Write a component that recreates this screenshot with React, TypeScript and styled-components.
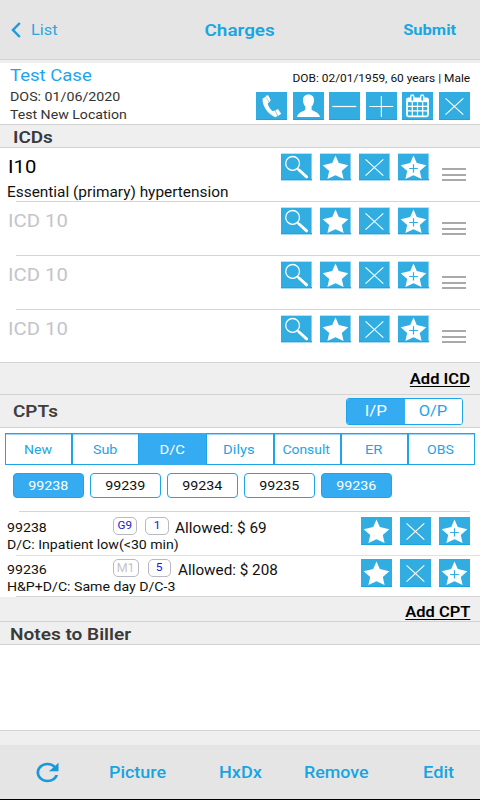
import React from "react";
import styled, { createGlobalStyle, css } from "styled-components";

const BLUE = "#1ea4e9";
const FILL = "#35acf1";
const TILE = "#31ade1";

const GlobalStyle = createGlobalStyle`
  * { box-sizing: border-box; }
  body { margin: 0; background: #fff; font-family: Roboto, sans-serif; color: #111; }
  svg { display: block; }
`;

const Screen = styled.div`
  width: 480px;
  height: 800px;
  display: flex;
  flex-direction: column;
  overflow: hidden;
  background: #fff;
  border-bottom: 1px solid #000;
`;

/* Wide-set label: glyphs are stretched horizontally by $sx */
const Label = styled.span<{
  $size: number;
  $sx?: number;
  $h?: number;
  $weight?: number;
  $color?: string;
  $from?: "left" | "center" | "right";
}>`
  display: block;
  width: max-content;
  white-space: pre;
  font-size: ${(p) => p.$size}px;
  line-height: ${(p) => p.$h ?? 20}px;
  font-weight: ${(p) => p.$weight ?? 400};
  color: ${(p) => p.$color ?? "#111"};
  transform: scaleX(${(p) => p.$sx ?? 1.09});
  transform-origin: ${(p) => p.$from ?? "left"} center;
`;

const Header = styled.header`
  height: 60px;
  flex: none;
  display: grid;
  grid-template-columns: 1fr auto 1fr;
  align-items: center;
  padding: 1px 11px 0 11px;
  background: #e5e5e5;
  border-bottom: 1px solid #d4d4d4;
  & > :last-child { justify-self: end; margin-right: 13px; }
`;

const Back = styled.div`
  display: flex;
  align-items: center;
  gap: 9.5px;
`;

const Strip = styled.div<{ $h: number }>`
  flex: none;
  height: ${(p) => p.$h}px;
  background: #efefef;
`;

const Patient = styled.section`
  flex: none;
  height: 61px;
  display: flex;
  justify-content: space-between;
  padding: 4px 10px 0 10px;
`;

const DosLabel = styled(Label)`
  margin-top: 4px;
`;

const PatientSide = styled.div`
  display: flex;
  flex-direction: column;
  align-items: flex-end;
  padding-top: 4px;
  gap: 6px;
`;

const Bar = styled.div<{ $h: number; $top?: boolean; $left?: number; $right?: number; $pt?: number }>`
  flex: none;
  height: ${(p) => p.$h}px;
  display: flex;
  align-items: center;
  justify-content: space-between;
  padding: ${(p) => p.$pt ?? 0}px ${(p) => p.$right ?? 10}px 0 ${(p) => p.$left ?? 12.5}px;
  background: #efefef;
  border-bottom: 1px solid #d2d2d2;
  ${(p) => p.$top && css`border-top: 1px solid #d2d2d2;`}
`;

const Underlined = styled(Label)`
  text-decoration: underline;
  text-decoration-thickness: 1px;
  text-underline-offset: 2px;
  margin-left: auto;
`;

const Tiles = styled.div<{ $gap: number }>`
  display: flex;
  gap: ${(p) => p.$gap}px;
`;

const Tile = styled.div<{ $w?: number; $edge?: boolean }>`
  width: ${(p) => p.$w ?? 31}px;
  height: 28px;
  background: ${TILE};
  box-shadow: inset 0 -1px #18a5e3;
  ${(p) => p.$edge && css`box-shadow: inset 0 1px #b9e0f4, inset 0 -1px #a9dbf3, inset 0 -2px #1ca6e2, inset -1px 0 #8acdec;`}
`;

const IcdRow = styled.div<{ $h: number }>`
  flex: none;
  height: ${(p) => p.$h}px;
  display: flex;
  justify-content: space-between;
  padding: 5px 14px 0 7px;
`;

const IcdText = styled.div`
  display: flex;
  flex-direction: column;
  gap: 6px;
  padding-top: 4px;
`;

const IcdCode = styled(Label)`
  margin-left: 1px;
`;

const IcdTools = styled.div`
  display: flex;
  gap: 13px;
`;

const Grip = styled.div`
  width: 24px;
  height: 13px;
  margin-top: 15px;
  display: flex;
  flex-direction: column;
  justify-content: space-between;
`;

const GripLine = styled.div`
  height: 2px;
  background: #a9a9a9;
`;

const Divider = styled.div<{ $left: number; $right?: number; $color?: string }>`
  flex: none;
  height: 1px;
  margin: 0 ${(p) => p.$right ?? 0}px 0 ${(p) => p.$left}px;
  background: ${(p) => p.$color ?? "#d4d4d4"};
`;

const Segmented = styled.div`
  width: 117px;
  height: 27px;
  display: flex;
  border: 1px solid ${BLUE};
  border-radius: 3px;
  overflow: hidden;
  background: #fff;
`;

const Segment = styled.div<{ $active?: boolean }>`
  flex: 1;
  display: flex;
  align-items: center;
  justify-content: center;
  background: ${(p) => (p.$active ? FILL : "#fff")};
`;

const Tabs = styled.div`
  flex: none;
  display: grid;
  grid-template-columns: repeat(7, 1fr);
  height: 32px;
  margin: 5px 5px 0;
`;

const Tab = styled.div<{ $active?: boolean }>`
  display: flex;
  align-items: center;
  justify-content: center;
  padding: 2px 2px 0 0;
  border: 1px solid ${(p) => (p.$active ? FILL : BLUE)};
  background: ${(p) => (p.$active ? FILL : "#fff")};
  box-shadow: inset 0 1px ${(p) => (p.$active ? FILL : "#a5d8f8")};
`;

const Chips = styled.div`
  flex: none;
  display: flex;
  gap: 6px;
  padding: 8px 13px 13px;
`;

const Chip = styled.div<{ $active?: boolean }>`
  width: 71px;
  height: 25px;
  display: flex;
  align-items: center;
  justify-content: center;
  border: 1px solid ${BLUE};
  border-radius: 4px;
  background: ${(p) => (p.$active ? FILL : "#fff")};
`;

const CptRow = styled.div<{ $h: number; $pt: number }>`
  flex: none;
  height: ${(p) => p.$h}px;
  display: flex;
  justify-content: space-between;
  padding: ${(p) => p.$pt}px 10px 0 7px;
`;

const CptText = styled.div`
  display: flex;
  flex-direction: column;
`;

const CptLine = styled.div`
  display: grid;
  grid-template-columns: 106px auto auto auto;
  align-items: start;
  height: 20px;
`;

const CptLabel = styled(Label)`
  margin-top: 1px;
`;

const Badge = styled.div<{ $w: number; $mr: number }>`
  width: ${(p) => p.$w}px;
  height: 18px;
  margin-right: ${(p) => p.$mr}px;
  display: flex;
  align-items: center;
  justify-content: center;
  border: 1px solid #b9b9c2;
  border-radius: 5px;
`;

const Notes = styled.div`
  flex: none;
  height: 86px;
  border-bottom: 1px solid #d4d4d4;
`;

const Footer = styled.footer`
  flex: 1;
  display: grid;
  grid-template-columns: 78px 110px 85px 119px auto;
  align-items: center;
  padding: 2px 0 0 31px;
  background: #e5e5e5;
  & > svg { margin-top: -2px; }
`;

const STAR = "M15.5 2.5 18.8 10 28.3 12.2 21.8 18 23.6 26 15.5 22.3 7.4 26 9.2 18 2.7 12.2 12.2 10Z";

type Glyph = "phone" | "person" | "minus" | "plus" | "calendar" | "close" | "search" | "star" | "starPlus";

const glyphs: Record<Glyph, React.ReactNode> = {
  phone: (
    <g fill="#fff">
      <path d="M6.6 6.6C5.8 14 12.5 23 19.5 25.2L21.5 24 18.6 18.6 16.9 19.3C14.2 17.4 12.4 14.8 11.7 11.6L13 10.4 9.6 4.8Z" />
      <path d="M9.8 3.7 12.2 3.2 14.7 8.2 13.4 10.2 9.6 4.4ZM19.2 18.4 22 17 25.2 21.8 22 24Z" />
    </g>
  ),
  person: (
    <path
      d="M15.5 2.5C11.7 2.5 9.8 5 10 8.4 10.1 11 11 13.2 12.4 14.5V17.4C11.8 19.2 4.8 19.6 4 25H27C26.2 19.6 19.2 19.2 18.6 17.4V14.5C20 13.2 20.9 11 21 8.4 21.2 5 19.3 2.5 15.5 2.5Z"
      fill="#fff"
    />
  ),
  minus: <path d="M3.3 14.5H27.3" stroke="#fff" strokeWidth="1.2" />,
  plus: <path d="M3.3 14.5H27.3M15.4 4V25" stroke="#fff" strokeWidth="1.2" />,
  calendar: (
    <g fill="none" stroke="#fff">
      <rect x="5" y="6.4" width="21" height="17.9" rx="1.5" strokeWidth="1.8" />
      <path d="M4.6 8.3H26.4" strokeWidth="3.6" />
      <path d="M6 14.4H25M6 18.9H25M10.3 10V24M15.5 10V24M20.7 10V24" strokeWidth="1.2" />
      <path d="M10.3 4.4V8M20.2 4.4V8" strokeWidth="4.4" strokeLinecap="round" />
      <path d="M10.3 4.6V8M20.2 4.6V8" stroke={TILE} strokeWidth="1.6" strokeLinecap="round" />
    </g>
  ),
  close: <path d="M6.5 6.3 24.3 22.7M24.3 6.3 6.5 22.7" stroke="#fff" strokeWidth="1.1" />,
  search: (
    <g fill="none" stroke="#fff">
      <circle cx="11.6" cy="10.4" r="6.9" strokeWidth="1.3" />
      <path d="M16.3 15.3 18.5 17.4" strokeWidth="1.6" />
      <path d="M18 17 25.6 23.8" strokeWidth="3" strokeLinecap="round" />
    </g>
  ),
  star: <path d={STAR} fill="#fff" />,
  starPlus: (
    <>
      <path d={STAR} fill="#fff" />
      <path d="M11.2 15.5H19.8M15.5 11.2V19.6" stroke={TILE} strokeWidth="1.2" />
    </>
  ),
};

const IconTile = ({ name, w = 31, edge }: { name: Glyph; w?: number; edge?: boolean }) => (
  <Tile $w={w} $edge={edge}>
    <svg width={w} height="28" viewBox="0 0 31 28" preserveAspectRatio="none">
      {glyphs[name]}
    </svg>
  </Tile>
);

const patientIcons: Glyph[] = ["phone", "person", "minus", "plus", "calendar", "close"];
const icdIcons: Glyph[] = ["search", "star", "close", "starPlus"];
const cptIcons: Glyph[] = ["star", "close", "starPlus"];

const icds = [{ code: "I10", text: "Essential (primary) hypertension" }, null, null, null];

const tabs: { name: string; sx: number }[] = [
  { name: "New", sx: 1.08 },
  { name: "Sub", sx: 1.1 },
  { name: "D/C", sx: 1.14 },
  { name: "Dilys", sx: 1.14 },
  { name: "Consult", sx: 1.07 },
  { name: "ER", sx: 1.13 },
  { name: "OBS", sx: 1.08 },
];

const chips = ["99238", "99239", "99234", "99235", "99236"];

export default function App() {
  return (
    <Screen>
      <GlobalStyle />
      <Header>
        <Back>
          <svg width="10" height="16" viewBox="0 0 10 16">
            <path d="M8.8 1 2 8 8.8 15" fill="none" stroke="#1b9be0" strokeWidth="2.5" />
          </svg>
          <Label $size={15} $color="#2ba6e0">List</Label>
        </Back>
        <Label $size={17} $sx={1.11} $weight={600} $color="#17a7e2" $from="center">Charges</Label>
        <Label $size={15} $sx={1.1} $weight={700} $color="#17a7e2" $from="right">Submit</Label>
      </Header>
      <Strip $h={3} />

      <Patient>
        <div>
          <Label $size={17} $h={17} $sx={1.09} $color="#1ca5ef">Test Case</Label>
          <DosLabel $size={13} $h={18} $sx={1.095} $color="#333">DOS: 01/06/2020</DosLabel>
          <Label $size={13} $h={17} $sx={1.085} $color="#333">Test New Location</Label>
        </div>
        <PatientSide>
          <Label $size={11} $h={15} $sx={1.082} $from="right">DOB: 02/01/1959, 60 years | Male</Label>
          <Tiles $gap={5.6}>
            {patientIcons.map((n) => <IconTile key={n} name={n} w={31} />)}
          </Tiles>
        </PatientSide>
      </Patient>

      <Bar $h={24} $top $pt={2}>
        <Label $size={17} $sx={1.11} $weight={600} $color="#3a3a3a">ICDs</Label>
      </Bar>

      {icds.map((icd, i) => (
        <React.Fragment key={i}>
          <IcdRow $h={i < 3 ? 53 : 52}>
            <IcdText>
              <IcdCode $size={18} $h={20} $sx={1.125} $color={icd ? "#000" : "#c4c4ca"}>{icd ? icd.code : "ICD 10"}</IcdCode>
              {icd && <Label $size={14} $h={18} $sx={1.1}>{icd.text}</Label>}
            </IcdText>
            <IcdTools>
              <Tiles $gap={8}>
                {icdIcons.map((n) => <IconTile key={n} name={n} edge />)}
              </Tiles>
              <Grip><GripLine /><GripLine /><GripLine /></Grip>
            </IcdTools>
          </IcdRow>
          {i < 3 && <Divider $left={16} />}
        </React.Fragment>
      ))}
      <Divider $left={0} />

      <Bar $h={32} $pt={1}>
        <Underlined $size={14} $sx={1.18} $weight={600} $color="#000" $from="right">Add ICD</Underlined>
      </Bar>
      <Bar $h={33} $right={17}>
        <Label $size={17} $sx={1.11} $weight={600} $color="#3f3f3f" $h={24}>CPTs</Label>
        <Segmented>
          <Segment $active><Label $size={15} $sx={1.13} $color="#fff" $from="center">I/P</Label></Segment>
          <Segment><Label $size={15} $sx={1.1} $color={BLUE} $from="center">O/P</Label></Segment>
        </Segmented>
      </Bar>

      <Tabs>
        {tabs.map((t, i) => (
          <Tab key={t.name} $active={i === 2}>
            <Label $size={13} $sx={t.sx} $color={i === 2 ? "#fff" : BLUE} $from="center">{t.name}</Label>
          </Tab>
        ))}
      </Tabs>
      <Chips>
        {chips.map((c, i) => {
          const active = i === 0 || i === 4;
          return (
            <Chip key={c} $active={active}>
              <Label $size={13} $sx={1.1} $color={active ? "#fff" : "#111"} $from="center">{c}</Label>
            </Chip>
          );
        })}
      </Chips>

      <Divider $left={19} $right={10} />
      <CptRow $h={43} $pt={5}>
        <CptText>
          <CptLine>
            <CptLabel $size={13}>99238</CptLabel>
            <Badge $w={24} $mr={8}><Label $size={11} $sx={1.06} $color="#1a1ad0" $from="center">G9</Label></Badge>
            <Badge $w={24} $mr={6}><Label $size={11} $color="#1a1ad0" $from="center">1</Label></Badge>
            <CptLabel $size={14} $sx={1.095}>Allowed: $ 69</CptLabel>
          </CptLine>
          <Label $size={13} $h={16} $sx={1.085}>D/C: Inpatient low(&lt;30 min)</Label>
        </CptText>
        <Tiles $gap={8}>{cptIcons.map((n) => <IconTile key={n} name={n} />)}</Tiles>
      </CptRow>
      <Divider $left={16} $color="#e2e2e2" />
      <CptRow $h={40} $pt={3}>
        <CptText>
          <CptLine>
            <CptLabel $size={13}>99236</CptLabel>
            <Badge $w={26} $mr={9}><Label $size={12} $sx={1.04} $color="#c4c4ca" $from="center">M1</Label></Badge>
            <Badge $w={23} $mr={6.5}><Label $size={11} $color="#1a1ad0" $from="center">5</Label></Badge>
            <CptLabel $size={14} $sx={1.09}>Allowed: $ 208</CptLabel>
          </CptLine>
          <Label $size={13} $h={16} $sx={1.087}>H&amp;P+D/C: Same day D/C-3</Label>
        </CptText>
        <Tiles $gap={8}>{cptIcons.map((n) => <IconTile key={n} name={n} />)}</Tiles>
      </CptRow>
      <Divider $left={16} />

      <Bar $h={25} $pt={6}>
        <Underlined $size={14} $sx={1.175} $weight={600} $color="#000" $from="right">Add CPT</Underlined>
      </Bar>
      <Bar $h={23} $left={10} $pt={2}>
        <Label $size={17} $sx={1.12} $weight={600} $color="#3a3a3a">Notes to Biller</Label>
      </Bar>
      <Notes />
      <Strip $h={14} />

      <Footer>
        <svg width="33" height="29" viewBox="0 0 24 24" preserveAspectRatio="none">
          <path
            d="M17.65 6.35C16.2 4.9 14.21 4 12 4c-4.42 0-7.99 3.58-7.99 8s3.57 8 7.99 8c3.73 0 6.84-2.55 7.73-6h-2.08c-.82 2.33-3.04 4-5.65 4-3.31 0-6-2.69-6-6s2.69-6 6-6c1.66 0 3.14.69 4.22 1.78L13 11h7V4l-2.35 2.35z"
            fill="#1b96dc"
          />
        </svg>
        <Label $size={16} $sx={1.12} $weight={500} $color="#17a5e2">Picture</Label>
        <Label $size={16} $sx={1.13} $weight={500} $color="#17a5e2">HxDx</Label>
        <Label $size={16} $sx={1.115} $weight={500} $color="#17a5e2">Remove</Label>
        <Label $size={16} $sx={1.14} $weight={500} $color="#17a5e2">Edit</Label>
      </Footer>
    </Screen>
  );
}
